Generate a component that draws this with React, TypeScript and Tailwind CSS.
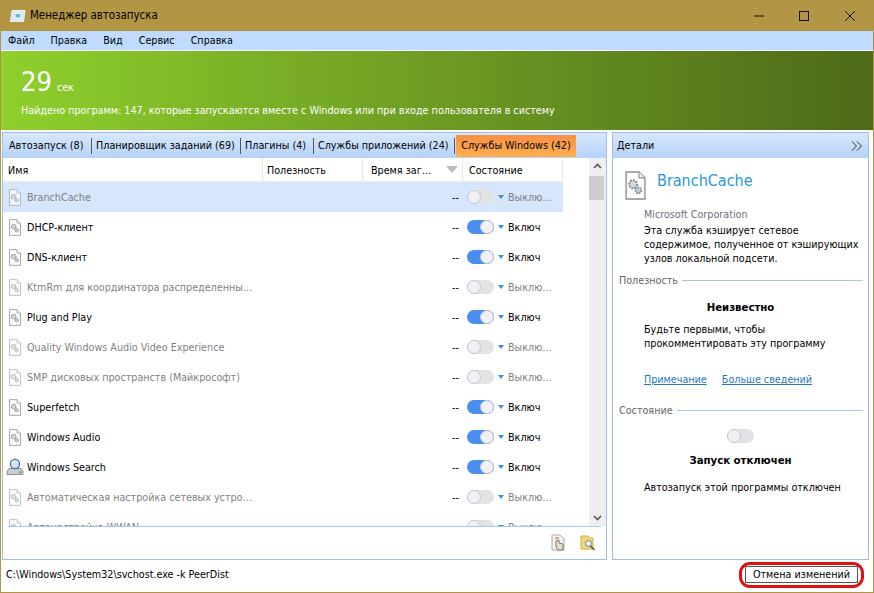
import React from "react";

const font = { fontFamily: '"DejaVu Sans Condensed", "DejaVu Sans", sans-serif', fontStretch: "condensed" };

function DocIcon({ w = 12, h = 17, dim = false }: { w?: number; h?: number; dim?: boolean }) {
  return (
    <svg width={w} height={h} viewBox="0 0 15 21" className={dim ? "opacity-70" : ""}>
      <path d="M0.7 0.7H10L14.3 5V20.3H0.7Z" fill="#fff" stroke="#8f8f8f" strokeWidth="1" />
      <path d="M10 0.7V5H14.3" fill="#eee" stroke="#8f8f8f" strokeWidth="0.8" />
      <circle cx="5.8" cy="9.6" r="2.9" fill="#d2d8dc" stroke="#7f8a92" strokeWidth="1.3" strokeDasharray="1.4 0.8" />
      <circle cx="9.6" cy="14" r="2.2" fill="#c2ccd2" stroke="#7f8a92" strokeWidth="1.2" strokeDasharray="1.2 0.7" />
    </svg>
  );
}

function SearchIcon() {
  return (
    <svg width="18" height="18" viewBox="0 0 18 18">
      <path d="M1 13.5L3 10.5H15L17 13.5V16.5H1Z" fill="#c9cdd2" stroke="#767b80" strokeWidth="0.8" />
      <rect x="13" y="13.5" width="2.5" height="1.6" fill="#55b040" />
      <circle cx="9" cy="6" r="4.6" fill="#cfe4f7" stroke="#4b6f93" strokeWidth="1.3" />
      <path d="M6.5 5A3 3 0 0 1 9 3" fill="none" stroke="#fff" strokeWidth="1" />
    </svg>
  );
}

function Toggle({ on }: { on: boolean }) {
  return (
    <span className={`relative inline-block h-[14px] w-[27px] shrink-0 rounded-full ${on ? "bg-[#4a8ff0]" : "bg-[#e3e3e6]"}`}>
      <span className={`absolute top-0 h-[14px] w-[14px] rounded-full border border-[#c4c8d0] bg-[#f0f0f5] ${on ? "right-0" : "left-0"}`} />
    </span>
  );
}

type Row = { name: string; on: boolean; icon?: "search" };
const rows: Row[] = [
  { name: "BranchCache", on: false },
  { name: "DHCP-клиент", on: true },
  { name: "DNS-клиент", on: true },
  { name: "KtmRm для координатора распределенны…", on: false },
  { name: "Plug and Play", on: true },
  { name: "Quality Windows Audio Video Experience", on: false },
  { name: "SMP дисковых пространств (Майкрософт)", on: false },
  { name: "Superfetch", on: true },
  { name: "Windows Audio", on: true },
  { name: "Windows Search", on: true, icon: "search" },
  { name: "Автоматическая настройка сетевых устро…", on: false },
  { name: "Автонастройка WWAN", on: false },
];

const tabs = ["Автозапуск (8)", "Планировщик заданий (69)", "Плагины (4)", "Службы приложений (24)"];
const tabWidths = ["w-[83px]", "w-[149px]", "w-[73px]", "w-[141px]"];

function ServiceRow({ r, selected }: { r: Row; selected: boolean }) {
  return (
    <div className={`flex h-[30px] w-[560px] shrink-0 items-center ${selected ? "bg-[#d6e6fc]" : "bg-white"} ${r.on ? "text-black" : "text-[#7f7f7f]"}`}>
      <div className="flex w-[24px] shrink-0 justify-center pr-[1px]">
        {r.icon === "search" ? <SearchIcon /> : <DocIcon dim={!r.on} />}
      </div>
      <div className="w-[235px] shrink-0 whitespace-nowrap">{r.name}</div>
      <div className="w-[197px] shrink-0 text-right text-black">--</div>
      <div className="ml-[8px] flex items-center">
        <Toggle on={r.on} />
        <span className="ml-[4px] mr-[4px] h-0 w-0 border-x-[3.5px] border-t-[4px] border-x-transparent border-t-[#3b8fe8]" />
        <span>{r.on ? "Включ" : "Выклю…"}</span>
      </div>
    </div>
  );
}

function SectionTitle({ children }: { children: string }) {
  return (
    <div className="flex items-center gap-[4px] pl-[6px] pr-[5px] text-[#666]">
      <span>{children}</span>
      <span className="h-px flex-1 bg-[#a9c6ee]" />
    </div>
  );
}

export default function App() {
  return (
    <div style={font} className="flex h-[593px] w-[874px] flex-col overflow-hidden border-x border-b border-[#b39643] bg-white text-[10.7px] leading-[15px] text-black">
      <div className="flex h-[31px] shrink-0 items-center bg-[#b39643]">
        <svg width="16" height="14" viewBox="0 0 16 14" className="ml-[9px]">
          <path d="M2 1.5H15L13.5 12.5H0.5Z" fill="#d5e9fa" stroke="#eaf4fd" />
          <rect x="5" y="4.5" width="6" height="4.5" fill="#6fb0e0" stroke="#fff" />
        </svg>
        <span className="ml-[4px] text-[11.4px]">Менеджер автозапуска</span>
        <div className="ml-auto flex items-center">
          <svg width="12" height="12" viewBox="0 0 12 12" className="mr-[33px]"><path d="M1 6H11" stroke="#111" strokeWidth="1" /></svg>
          <svg width="12" height="12" viewBox="0 0 12 12" className="mr-[34px]"><rect x="1.5" y="1.5" width="9" height="9" fill="none" stroke="#111" /></svg>
          <svg width="12" height="12" viewBox="0 0 12 12" className="mr-[17px]"><path d="M1 1L11 11M11 1L1 11" stroke="#111" /></svg>
        </div>
      </div>

      <div className="flex h-[19px] shrink-0 items-center gap-[16px] bg-[#bfdbff] pl-[7px]">
        <span>Файл</span>
        <span>Правка</span>
        <span>Вид</span>
        <span>Сервис</span>
        <span>Справка</span>
      </div>

      <div className="mt-px h-[79px] shrink-0 bg-gradient-to-r from-[#8fd02c] to-[#4d6a19] pl-[20px] pt-[15px] text-white">
        <div className="flex items-baseline">
          <span className="text-[27px] leading-[32px]">29</span>
          <span className="ml-[5px]">сек</span>
        </div>
        <div className="mt-[5px]">Найдено программ: 147, которые запускаются вместе с Windows или при входе пользователя в систему</div>
      </div>

      <div className="flex min-h-0 flex-1 gap-[5px] pl-px pr-[4px] pt-[2px]">
        <div className="flex w-[605px] shrink-0 flex-col border border-[#9dbde8]">
          <div className="flex h-[25px] shrink-0 items-center bg-gradient-to-b from-[#d8e8fd] to-[#b5d2f8] pl-[6px]">
            {tabs.map((t, i) => (
              <div key={t} className={`${tabWidths[i]} ${i > 0 ? "pl-[4px]" : ""} h-[16px] shrink-0 whitespace-nowrap border-r border-[#555]`}>
                {t}
              </div>
            ))}
            <div className="ml-[1px] flex h-[22px] w-[120px] shrink-0 items-center justify-center whitespace-nowrap bg-gradient-to-b from-[#f98f45] to-[#fdb050]">
              Службы Windows (42)
            </div>
          </div>
          <div className="flex min-h-0 flex-1 overflow-hidden">
            <div className="flex min-w-0 flex-1 flex-col">
              <div className="flex h-[24px] w-[560px] shrink-0 items-center border-b border-[#f0f0f0]">
                <div className="h-full w-[260px] shrink-0 border-r border-[#e5e5e5] pl-[5px] leading-[25px]">Имя</div>
                <div className="h-full w-[100px] shrink-0 border-r border-[#e5e5e5] pl-[4px] leading-[25px]">Полезность</div>
                <div className="relative h-full w-[100px] shrink-0 border-r border-[#e5e5e5] pl-[8px] leading-[25px]">
                  Время заг…
                  <span className="absolute right-[4px] top-[8px] h-0 w-0 border-x-[6px] border-t-[7px] border-x-transparent border-t-[#bdbdbd]" />
                </div>
                <div className="h-full w-[100px] shrink-0 border-r border-[#e5e5e5] pl-[6px] leading-[25px]">Состояние</div>
              </div>
              <div className="flex h-[345px] shrink-0 flex-col overflow-hidden">
                {rows.map((r, i) => (
                  <ServiceRow key={r.name} r={r} selected={i === 0} />
                ))}
              </div>
            </div>
            <div className="flex w-[17px] shrink-0 flex-col bg-[#eeeeee]">
              <svg width="17" height="17" viewBox="0 0 17 17"><path d="M5 10L8.5 6.5L12 10" fill="none" stroke="#555" strokeWidth="1.6" /></svg>
              <div className="mt-px h-[24px] w-[15px] bg-[#cdcdcd]" />
              <svg width="17" height="17" viewBox="0 0 17 17" className="mt-auto"><path d="M5 7L8.5 10.5L12 7" fill="none" stroke="#555" strokeWidth="1.6" /></svg>
            </div>
          </div>
          <div className="mx-[5px] h-px shrink-0 bg-[#a9c6ee]" />
          <div className="flex h-[32px] shrink-0 items-center justify-end gap-[14px] pr-[10px]">
            <svg width="16" height="18" viewBox="0 0 16 18">
              <path d="M2 1H10L14 5V16H2Z" fill="#f2f2f2" stroke="#aaa" />
              <path d="M6 7V13L8 16H13V10L9 9V6Z" fill="#e8dcd0" stroke="#777" />
              <path d="M5 4H9" stroke="#e07a3a" strokeWidth="1.4" />
            </svg>
            <svg width="16" height="18" viewBox="0 0 16 18">
              <path d="M1 2H8L9.5 4H13V15H1Z" fill="#f1d97a" stroke="#d0b050" />
              <circle cx="8.5" cy="9.5" r="3" fill="#e8f1f6" stroke="#6d7b85" />
              <path d="M10.5 12L14.5 16" stroke="#4d5a63" strokeWidth="1.6" />
            </svg>
          </div>
        </div>

        <div className="flex min-w-0 flex-1 flex-col border border-[#9dbde8]">
          <div className="flex h-[25px] shrink-0 items-center justify-between bg-gradient-to-b from-[#d8e8fd] to-[#b5d2f8] pl-[4px] pr-[5px]">
            <span>Детали</span>
            <svg width="12" height="10" viewBox="0 0 12 10"><path d="M1 0.5L5.5 5L1 9.5M6 0.5L10.5 5L6 9.5" fill="none" stroke="#333" /></svg>
          </div>
          <div className="flex min-h-0 flex-1 flex-col">
            <div className="flex items-start pl-[12px] pt-[13px]">
              <DocIcon w={21} h={29} />
              <span className="ml-[11px] text-[16px] leading-[20px] text-[#2a97dc]">BranchCache</span>
            </div>
            <div className="ml-[31px] mt-[7px] text-[#6d7080]">Microsoft Corporation</div>
            <div className="ml-[31px] mt-[2px] w-[219px] leading-[14px]">
              Эта служба кэширует сетевое содержимое, полученное от кэширующих узлов локальной подсети.
            </div>
            <div className="mt-[7px]"><SectionTitle>Полезность</SectionTitle></div>
            <div className="mt-[12px] text-center text-[11.3px] font-bold">Неизвестно</div>
            <div className="ml-[31px] mt-[8px] w-[210px] leading-[14px]">
              Будьте первыми, чтобы прокомментировать эту программу
            </div>
            <div className="ml-[31px] mt-[21px] flex gap-[15px] text-[#2277c8] underline">
              <span>Примечание</span>
              <span>Больше сведений</span>
            </div>
            <div className="mt-[16px]"><SectionTitle>Состояние</SectionTitle></div>
            <div className="mt-[11px] flex justify-center"><Toggle on={false} /></div>
            <div className="mt-[10px] text-center text-[11.3px] font-bold">Запуск отключен</div>
            <div className="ml-[31px] mt-[12px]">Автозапуск этой программы отключен</div>
          </div>
        </div>
      </div>

      <div className="flex h-[32px] shrink-0 items-center justify-between pb-[3px] pl-[5px] pr-[9px]">
        <span>C:\Windows\System32\svchost.exe -k PeerDist</span>
        <div className="rounded-[11px] border-[3px] border-[#e01010] px-[3px] py-[1.5px]">
          <div className="flex h-[17px] w-[113px] items-center justify-center border border-[#555] leading-[13px]">Отмена изменений</div>
        </div>
      </div>
    </div>
  );
}
